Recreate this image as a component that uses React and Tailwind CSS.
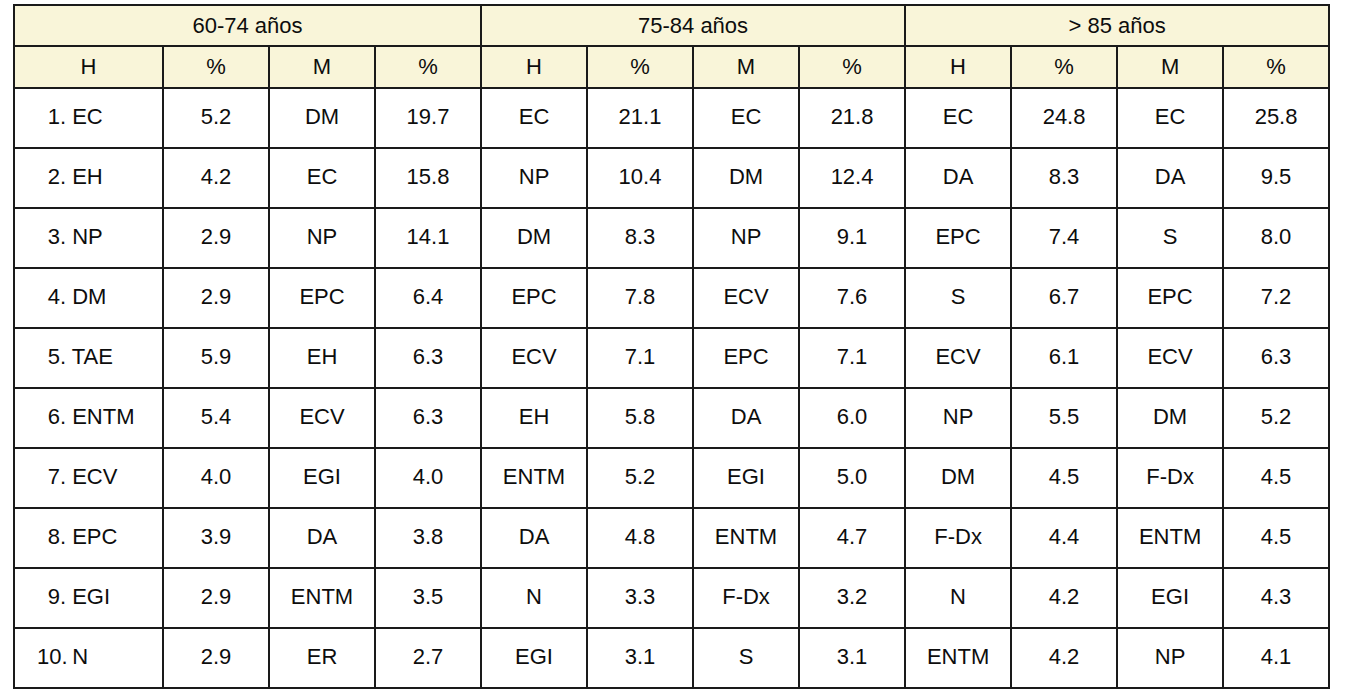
import React from "react";

const groups = ["60-74 años", "75-84 años", "> 85 años"];
const rows = [
  ["1.", "EC", "5.2", "DM", "19.7", "EC", "21.1", "EC", "21.8", "EC", "24.8", "EC", "25.8"],
  ["2.", "EH", "4.2", "EC", "15.8", "NP", "10.4", "DM", "12.4", "DA", "8.3", "DA", "9.5"],
  ["3.", "NP", "2.9", "NP", "14.1", "DM", "8.3", "NP", "9.1", "EPC", "7.4", "S", "8.0"],
  ["4.", "DM", "2.9", "EPC", "6.4", "EPC", "7.8", "ECV", "7.6", "S", "6.7", "EPC", "7.2"],
  ["5.", "TAE", "5.9", "EH", "6.3", "ECV", "7.1", "EPC", "7.1", "ECV", "6.1", "ECV", "6.3"],
  ["6.", "ENTM", "5.4", "ECV", "6.3", "EH", "5.8", "DA", "6.0", "NP", "5.5", "DM", "5.2"],
  ["7.", "ECV", "4.0", "EGI", "4.0", "ENTM", "5.2", "EGI", "5.0", "DM", "4.5", "F-Dx", "4.5"],
  ["8.", "EPC", "3.9", "DA", "3.8", "DA", "4.8", "ENTM", "4.7", "F-Dx", "4.4", "ENTM", "4.5"],
  ["9.", "EGI", "2.9", "ENTM", "3.5", "N", "3.3", "F-Dx", "3.2", "N", "4.2", "EGI", "4.3"],
  ["10.", "N", "2.9", "ER", "2.7", "EGI", "3.1", "S", "3.1", "ENTM", "4.2", "NP", "4.1"],
];
const sub = ["H", "%", "M", "%", "H", "%", "M", "%", "H", "%", "M", "%"];

export default function App() {
  return (
    <div
      className="w-[1345px] h-[697px] overflow-hidden bg-white pl-[13px] pt-[4px] text-[#0d0d0d]"
      style={{ fontFamily: '"Liberation Sans", Arial, sans-serif' }}
    >
      <table className="border-collapse table-fixed w-[1315px] text-[22px] leading-none">
        <colgroup>
          <col className="w-[149px]" />
          {sub.map((_, i) => (
            <col key={i} className="w-[106px]" />
          ))}
        </colgroup>
        <thead>
          <tr className="h-[41px] bg-[#f9f5d9]">
            {groups.map((g) => (
              <th
                key={g}
                colSpan={4}
                className="border-2 border-[#1a1a1a] font-normal text-center align-middle"
              >
                {g}
              </th>
            ))}
          </tr>
          <tr className="h-[42px] bg-[#f9f5d9]">
            {sub.map((s, i) => (
              <th key={i} className="border-2 border-[#1a1a1a] font-normal text-center align-middle">
                {s}
              </th>
            ))}
          </tr>
        </thead>
        <tbody>
          {rows.map((r) => (
            <tr key={r[0]} className="h-[60px]">
              <td className="border-2 border-[#1a1a1a] pl-[22px] pb-[3px] align-middle">
                <span className="inline-block w-[29px] text-right">{r[0]}</span>
                <span> {r[1]}</span>
              </td>
              {r.slice(2).map((c, i) => (
                <td key={i} className="border-2 border-[#1a1a1a] pb-[3px] text-center align-middle">
                  {c}
                </td>
              ))}
            </tr>
          ))}
        </tbody>
      </table>
    </div>
  );
}
